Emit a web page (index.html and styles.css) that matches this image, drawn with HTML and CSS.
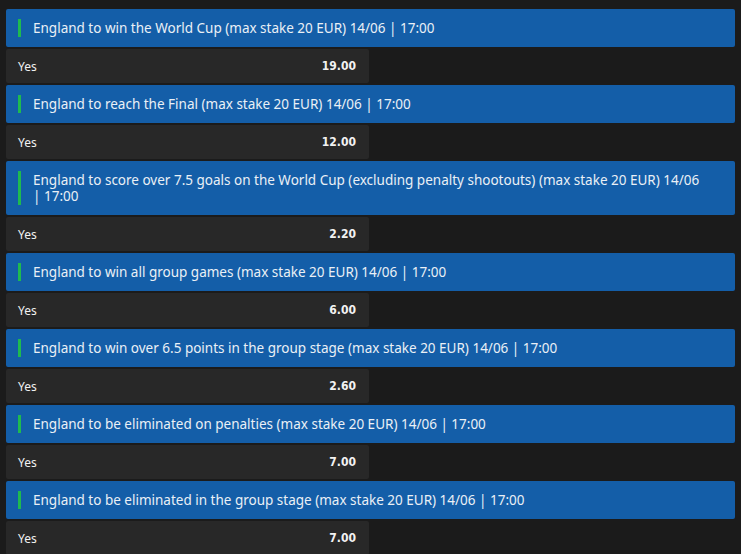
FILE: index.html
```html
<!DOCTYPE html>
<html>
<head>
<meta charset="utf-8">
<link rel="stylesheet" href="styles.css">
</head>
<body>
<div class="list">
  <div class="market">
    <div class="head"><span class="title">England to win the World Cup (max stake 20 EUR) 14/06 | 17:00</span></div>
    <div class="sel"><span class="name">Yes</span><span class="odds">19.00</span></div>
  </div>
  <div class="market">
    <div class="head"><span class="title">England to reach the Final (max stake 20 EUR) 14/06 | 17:00</span></div>
    <div class="sel"><span class="name">Yes</span><span class="odds">12.00</span></div>
  </div>
  <div class="market">
    <div class="head"><span class="title">England to score over 7.5 goals on the World Cup (excluding penalty shootouts) (max stake 20 EUR) 14/06 | 17:00</span></div>
    <div class="sel"><span class="name">Yes</span><span class="odds">2.20</span></div>
  </div>
  <div class="market">
    <div class="head"><span class="title">England to win all group games (max stake 20 EUR) 14/06 | 17:00</span></div>
    <div class="sel"><span class="name">Yes</span><span class="odds">6.00</span></div>
  </div>
  <div class="market">
    <div class="head"><span class="title">England to win over 6.5 points in the group stage (max stake 20 EUR) 14/06 | 17:00</span></div>
    <div class="sel"><span class="name">Yes</span><span class="odds">2.60</span></div>
  </div>
  <div class="market">
    <div class="head"><span class="title">England to be eliminated on penalties (max stake 20 EUR) 14/06 | 17:00</span></div>
    <div class="sel"><span class="name">Yes</span><span class="odds">7.00</span></div>
  </div>
  <div class="market">
    <div class="head"><span class="title">England to be eliminated in the group stage (max stake 20 EUR) 14/06 | 17:00</span></div>
    <div class="sel"><span class="name">Yes</span><span class="odds">7.00</span></div>
  </div>
</div>
</body>
</html>
```
FILE: styles.css
```css
html, body {
  margin: 0;
  padding: 0;
  background: #1b1b1b;
}
body {
  font-family: "Noto Sans", "Liberation Sans", sans-serif;
  color: #fff;
}
.list {
  display: flex;
  flex-direction: column;
  gap: 2px;
  padding: 9px 6px 0 6px;
}
.market {
  display: flex;
  flex-direction: column;
  gap: 2px;
}
.head {
  background: #145ea8;
  border-radius: 2px;
  padding: 10px 26px 10px 12px;
}
.title {
  display: block;
  border-left: 3px solid #1fba4f;
  padding: 1px 0 1px 12px;
  font-size: 13.5px;
  line-height: 16px;
  color: #eaf0f6;
}
.sel {
  width: 363px;
  height: 34px;
  box-sizing: border-box;
  background: #282828;
  border-radius: 2px;
  display: flex;
  align-items: center;
  justify-content: space-between;
  padding: 0 13px 0 12px;
}
.name {
  font-size: 12px;
  color: #f2f2f2;
}
.odds {
  font-family: "DejaVu Sans Condensed", "DejaVu Sans", sans-serif;
  font-weight: bold;
  font-size: 12px;
  color: #f2f2f2;
}
```
